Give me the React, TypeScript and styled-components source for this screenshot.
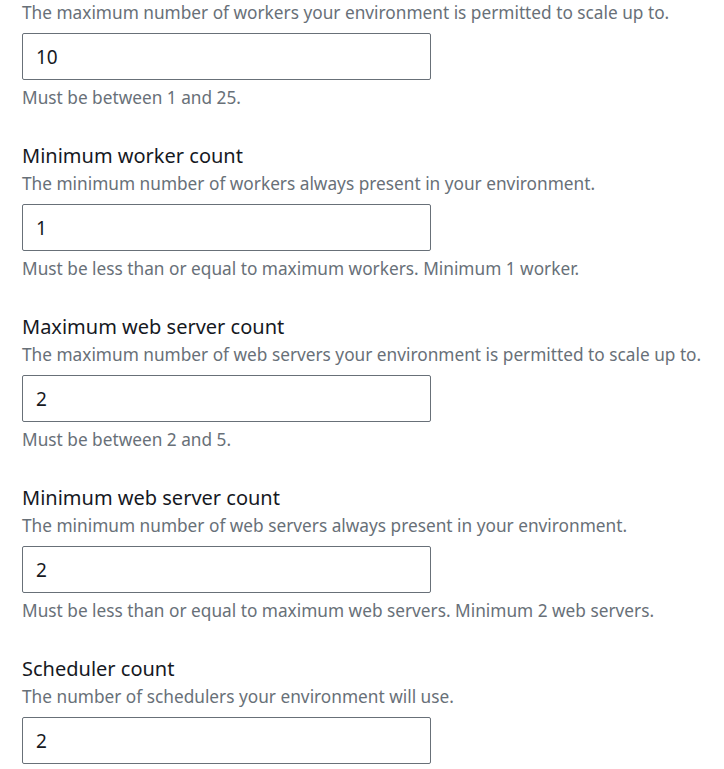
import React from "react";
import styled, { createGlobalStyle } from "styled-components";

const Global = createGlobalStyle`
  html, body { margin: 0; padding: 0; background: #ffffff; }
  body { font-family: "Noto Sans", "Open Sans", Arial, sans-serif; }
`;

const Page = styled.div`
  display: flex;
  flex-direction: column;
  gap: 32px;
  padding: 1px 22px 0 22px;
  width: 724px;
  box-sizing: border-box;
`;

const Field = styled.div`
  display: flex;
  flex-direction: column;
`;

const Label = styled.div`
  font-size: 20px;
  line-height: 28px;
  margin-bottom: 2px;
  color: #16191f;
`;

const Description = styled.div`
  font-size: 17.25px;
  line-height: 24px;
  color: #687078;
  margin-bottom: 8px;
  white-space: nowrap;
`;

const Input = styled.input`
  box-sizing: border-box;
  width: 409px;
  height: 47px;
  border: 1px solid #687078;
  border-radius: 2px;
  padding: 0 13px;
  font-family: inherit;
  font-size: 19px;
  color: #16191f;
  background: #fff;
  outline: none;
`;

const Hint = styled.div`
  font-size: 17.25px;
  line-height: 24px;
  color: #687078;
  margin-top: 6px;
`;

type F = { label?: string; desc: string; value: string; hint?: string };

const fields: F[] = [
  {
    desc: "The maximum number of workers your environment is permitted to scale up to.",
    value: "10",
    hint: "Must be between 1 and 25.",
  },
  {
    label: "Minimum worker count",
    desc: "The minimum number of workers always present in your environment.",
    value: "1",
    hint: "Must be less than or equal to maximum workers. Minimum 1 worker.",
  },
  {
    label: "Maximum web server count",
    desc: "The maximum number of web servers your environment is permitted to scale up to.",
    value: "2",
    hint: "Must be between 2 and 5.",
  },
  {
    label: "Minimum web server count",
    desc: "The minimum number of web servers always present in your environment.",
    value: "2",
    hint: "Must be less than or equal to maximum web servers. Minimum 2 web servers.",
  },
  {
    label: "Scheduler count",
    desc: "The number of schedulers your environment will use.",
    value: "2",
  },
];

export default function App() {
  return (
    <>
      <Global />
      <Page>
        {fields.map((f, i) => (
          <Field key={i}>
            {f.label && <Label>{f.label}</Label>}
            <Description>{f.desc}</Description>
            <Input type="text" defaultValue={f.value} readOnly />
            {f.hint && <Hint>{f.hint}</Hint>}
          </Field>
        ))}
      </Page>
    </>
  );
}
